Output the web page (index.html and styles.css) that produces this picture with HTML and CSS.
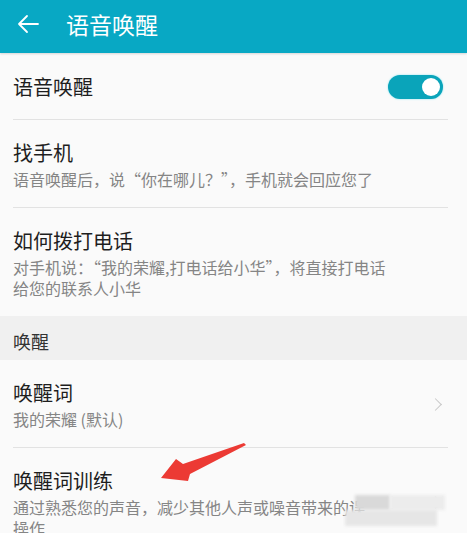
FILE: index.html
```html
<!DOCTYPE html>
<html lang="zh-CN">
<head>
    <meta charset="UTF-8">
    <title>语音唤醒</title>
    <link rel="stylesheet" href="styles.css">
</head>
<body>
    <header class="topbar">
        <svg class="back" width="24" height="20" viewBox="0 0 24 20">
            <path d="M22 10H3M11 2L3 10l8 8" fill="none" stroke="#fff" stroke-width="1.8" stroke-linecap="round" stroke-linejoin="round"/>
        </svg>
        <h1>语音唤醒</h1>
    </header>

    <main>
        <div class="item single">
            <span class="title">语音唤醒</span>
            <span class="switch"><span class="knob"></span></span>
        </div>
        <div class="item">
            <div class="text">
                <div class="title">找手机</div>
                <div class="sub">语音唤醒后，说“你在哪儿？”，手机就会回应您了</div>
            </div>
        </div>
        <div class="item last">
            <div class="text">
                <div class="title">如何拨打电话</div>
                <div class="sub">对手机说：“我的荣耀,打电话给小华”，将直接打电话<br>给您的联系人小华</div>
            </div>
        </div>

        <div class="section">唤醒</div>

        <div class="item">
            <div class="text">
                <div class="title">唤醒词</div>
                <div class="sub">我的荣耀 (默认)</div>
            </div>
            <span class="chevron"></span>
        </div>
        <div class="item last">
            <div class="text">
                <div class="title">唤醒词训练</div>
                <div class="sub">通过熟悉您的声音，减少其他人声或噪音带来的误<br>操作</div>
            </div>
            <span class="chevron"></span>
        </div>
    </main>

    <!-- 标注箭头 -->
    <svg class="arrow" width="95" height="45" viewBox="0 0 95 45">
        <path d="M5 38L20 19 27 24 88 3 90 5 34 34 32 41z" fill="#ec3a34"/>
    </svg>
    <div class="blur b1"></div>
    <div class="blur b2"></div>
    <div class="blur b3"></div>
</body>
</html>
```

FILE: styles.css
```css
body {
    margin: 0;
    width: 467px;
    height: 533px;
    overflow: hidden;
    position: relative;
    background: #fafafa;
    font-family: "Noto Sans CJK SC", "DejaVu Sans", sans-serif;
    color: #1e1e1e;
}

/* 顶栏 */
.topbar {
    height: 53px;
    background: #08a8c4;
    display: flex;
    align-items: center;
    padding: 0 16px;
    box-shadow: 0 1px 2px rgba(0, 0, 0, 0.15);
}

.back {
    margin-top: -5px;
}

.topbar h1 {
    margin: -5px 0 0 26px;
    font-size: 23px;
    font-weight: normal;
    color: #fff;
}

/* 列表 */
.item {
    display: flex;
    align-items: center;
    margin: 0 19px 0 13px;
    padding: 18px 0 17px;
    border-bottom: 1px solid #e2e2e2;
}

.item.last {
    border-bottom: none;
    padding: 18px 0 17px;
}

.item.single {
    height: 30px;
    padding: 19px 0 17px;
    justify-content: space-between;
}

.text {
    flex: 1;
}

.title {
    font-size: 20px;
    line-height: 30px;
}

.sub {
    margin-top: 1px;
    font-size: 16px;
    line-height: 21px;
    color: #858585;
}

.switch {
    width: 55px;
    height: 24px;
    border-radius: 12px;
    background: #0aa4ba;
    margin-right: 5px;
    display: flex;
    align-items: center;
    justify-content: flex-end;
    box-shadow: 0 0 2px #7fe0ee;
}

.knob {
    width: 18px;
    height: 18px;
    border-radius: 50%;
    background: #fff;
    margin-right: 3px;
}

.chevron {
    width: 8px;
    height: 8px;
    border-top: 1.5px solid #c8c8c8;
    border-right: 1.5px solid #c8c8c8;
    transform: rotate(45deg);
    margin-right: 8px;
}

.section {
    background: #f0f0f0;
    font-size: 18px;
    line-height: 24px;
    padding: 13px 13px 7px;
    color: #333;
}

/* 覆盖层 */
.arrow {
    position: absolute;
    left: 156px;
    top: 440px;
}

.blur {
    position: absolute;
    filter: blur(1.5px);
}

.b1 {
    left: 355px;
    top: 495px;
    width: 35px;
    height: 15px;
    background: #d9d9d9;
}

.b2 {
    left: 390px;
    top: 495px;
    width: 55px;
    height: 15px;
    background: #ececec;
}

.b3 {
    left: 345px;
    top: 510px;
    width: 92px;
    height: 16px;
    background: #e6e6e6;
}
```
